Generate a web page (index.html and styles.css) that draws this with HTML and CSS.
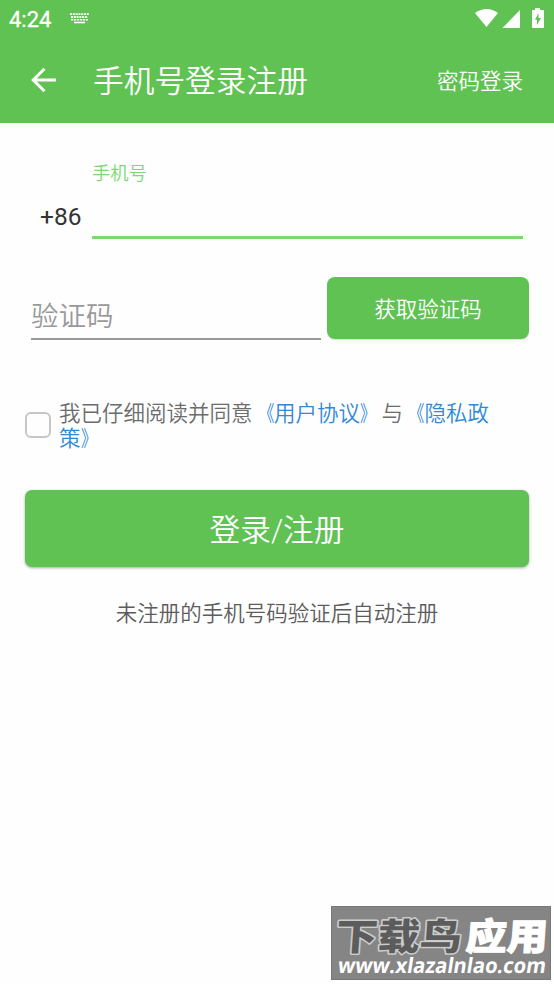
FILE: index.html
```html
<!DOCTYPE html>
<html lang="zh-CN">
<head>
<meta charset="utf-8">
<title>手机号登录注册</title>
<link rel="stylesheet" href="styles.css">
</head>
<body>
<header class="header">
  <div class="status">
    <span class="time">4:24</span>
    <svg class="keyboard" width="19" height="11" viewBox="0 0 19 11" fill="none" stroke="#fff">
      <path d="M0 1.2H19M1 4H18" stroke-width="1.8" stroke-dasharray="2 .8"/>
      <path d="M1 6.7H18" stroke-width="1.6" stroke-dasharray="2.3 .7"/>
      <path d="M4 9.500H15" stroke-width="1.6"/>
    </svg>
    <svg class="signals" width="70" height="21" viewBox="0 0 70 21" fill="#fff">
      <path d="M0 5Q11.500-3 23 5L11.500 19Z"/>
      <path d="M45 2V20H27.500Z"/>
      <path d="M60 0h5v2h3q1 0 1 1v16q0 1-1 1H58q-1 0-1-1V3q0-1 1-1h2Z"/>
      <path fill="#5fc253" d="M63.500 5v5H66L62 17v-5.300H60Z"/>
    </svg>
  </div>
  <nav class="bar">
    <svg class="back" width="26" height="26" viewBox="0 0 26 26" fill="none" stroke="#fff" stroke-width="3">
      <path d="M25 13H3M13.500 1.700L2.200 13L13.500 24.300"/>
    </svg>
    <h1 class="title">手机号登录注册</h1>
    <a class="alt">密码登录</a>
  </nav>
</header>
<main class="form">
  <div class="phone">
    <span class="code">+86</span>
    <label class="phone-field">手机号</label>
  </div>
  <div class="verify">
    <div class="verify-field">验证码</div>
    <button class="send">获取验证码</button>
  </div>
  <div class="agree">
    <span class="check"></span>
    <p class="terms">我已仔细阅读并同意<a><span class="open">《</span>用户协议<span class="close">》</span></a>与<a><span class="open">《</span>隐私政策<span class="close">》</span></a></p>
  </div>
  <button class="submit">登录/注册</button>
  <p class="hint">未注册的手机号码验证后自动注册</p>
</main>
<aside class="mark">
  <svg width="220" height="74" viewBox="0 0 220 74">
    <g class="mark-name" transform="translate(4 44) skewX(-4)">
      <text class="mark-dark" textLength="126" lengthAdjust="spacingAndGlyphs">下载鸟</text>
      <text class="mark-light" x="130" textLength="82" lengthAdjust="spacingAndGlyphs">应用</text>
    </g>
    <text class="mark-url" transform="translate(6 67) skewX(-9)" textLength="208" lengthAdjust="spacingAndGlyphs">www.xlazalnlao.com</text>
  </svg>
</aside>
</body>
</html>
```
FILE: styles.css
```css
* { box-sizing: border-box; }
body {
  margin: 0;
  height: 984px;
  display: flex;
  flex-direction: column;
  background: #fefefe;
  font-family: Roboto, "Noto Sans CJK SC", sans-serif;
  font-weight: 350;
  overflow: hidden;
}
h1, p { margin: 0; font-weight: inherit; }
button { border: 0; padding: 0; font: inherit; color: #fff; background: #5fc253; }
.header { height: 123px; background: #5fc253; color: #fff; }
.status { display: flex; height: 37px; padding: 8px 9px 0; align-items: flex-start; }
.time { width: 61px; font-size: 22px; line-height: 24px; font-weight: 400; -webkit-text-stroke: .3px #fff; }
.keyboard { margin-top: 5px; }
.signals { margin-left: auto; }
.bar { display: flex; height: 86px; padding: 0 31px 0 31px; align-items: center; }
.title { margin-left: 36px; padding-top: 3px; font-size: 30.700px; line-height: 40px; }
.alt { margin-left: auto; padding-top: 3px; font-size: 21.500px; line-height: 30px; }
.form { display: flex; flex-direction: column; padding: 38px 25px 0; }
.phone { display: flex; height: 78px; padding-right: 6px; }
.code { width: 67px; padding: 39px 0 0 15px; font-size: 24.500px; line-height: 34px; font-weight: 400; color: #333; }
.phone-field { flex: 1; padding-top: 1px; border-bottom: 3px solid #7bd970; color: #7bd970; font-size: 18.300px; line-height: 24px; }
.verify { display: flex; gap: 6px; height: 62px; margin-top: 38px; padding-left: 6px; }
.verify-field { flex: 1; height: 63px; padding-top: 20px; border-bottom: 2px solid #999; color: #999; font-size: 27.500px; line-height: 40px; }
.send { width: 202px; padding-bottom: 2px; border-radius: 8px; font-size: 21.500px; box-shadow: 0 1px 2px #0002; }
.agree { display: flex; align-items: center; height: 50px; margin-top: 61px; }
.check { width: 26px; height: 26px; border: 2px solid #c6c6c6; border-radius: 6px; }
.terms { width: 450px; margin-left: 8px; padding-top: 1px; font-size: 21.500px; line-height: 25px; color: #6c6c6c; }
.terms a { color: #2f89d6; }
.open, .close { display: inline-block; transform: scaleX(.74); }
.open { transform-origin: right; }
.close { transform-origin: left; }
.submit { height: 77px; margin-top: 40px; padding-bottom: 2px; border-radius: 7px; font-size: 30.700px; box-shadow: 0 1px 3px #0005; }
.hint { margin-top: 32px; text-align: center; font-size: 21.500px; line-height: 30px; color: #5c5c5c; }
.mark { width: 220px; height: 74px; margin: auto 3px 4px auto; background: #858585; border: 1px solid #777; }
.mark svg { display: block; margin: -1px; }
.mark-name { font: 900 37px "Noto Sans CJK SC", sans-serif; paint-order: stroke; stroke-linejoin: round; }
.mark-dark { fill: #5c5c5c; stroke: #ccc; stroke-width: 3px; }
.mark-light { fill: #fff; stroke: #fff; stroke-width: 1px; }
.mark-url { font: 700 21px "Open Sans", sans-serif; fill: #fff; }
```
